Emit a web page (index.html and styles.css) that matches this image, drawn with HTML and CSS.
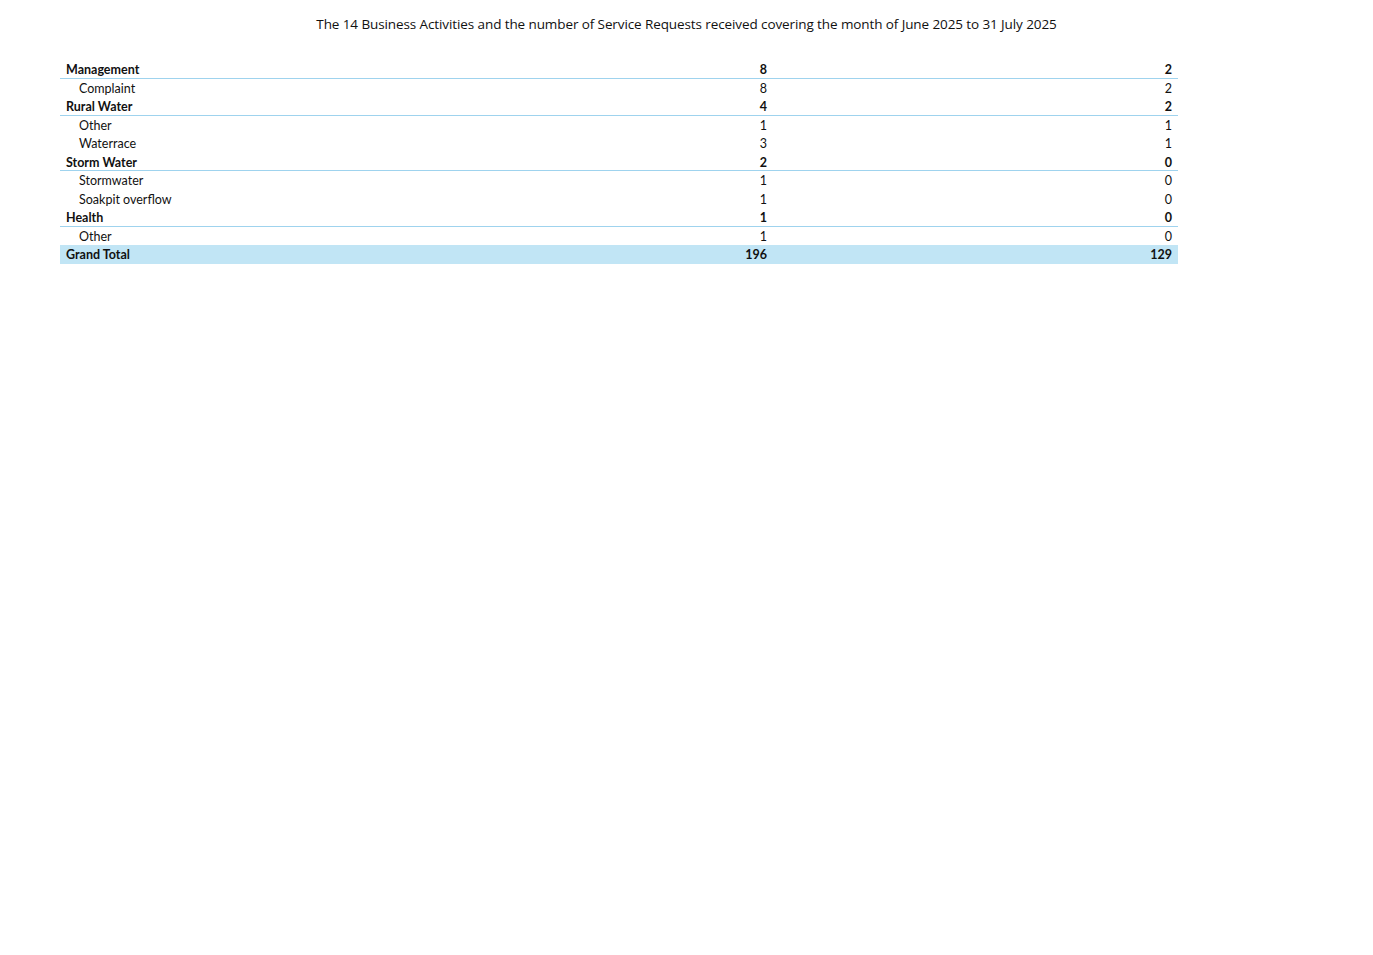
FILE: index.html
```html
<!DOCTYPE html>
<html>
<head>
<meta charset="utf-8">
<link rel="stylesheet" href="styles.css">
</head>
<body>
<h1 class="title">The 14 Business Activities and the number of Service Requests received covering the month of June 2025 to 31 July 2025</h1>
<div class="pivot">
  <div class="row group"><span class="label">Management</span><span class="num">8</span><span class="num">2</span></div>
  <div class="row item"><span class="label">Complaint</span><span class="num">8</span><span class="num">2</span></div>
  <div class="row group"><span class="label">Rural Water</span><span class="num">4</span><span class="num">2</span></div>
  <div class="row item"><span class="label">Other</span><span class="num">1</span><span class="num">1</span></div>
  <div class="row item"><span class="label">Waterrace</span><span class="num">3</span><span class="num">1</span></div>
  <div class="row group"><span class="label">Storm Water</span><span class="num">2</span><span class="num">0</span></div>
  <div class="row item"><span class="label">Stormwater</span><span class="num">1</span><span class="num">0</span></div>
  <div class="row item"><span class="label">Soakpit overflow</span><span class="num">1</span><span class="num">0</span></div>
  <div class="row group"><span class="label">Health</span><span class="num">1</span><span class="num">0</span></div>
  <div class="row item"><span class="label">Other</span><span class="num">1</span><span class="num">0</span></div>
  <div class="row total"><span class="label">Grand Total</span><span class="num">196</span><span class="num">129</span></div>
</div>
</body>
</html>
```
FILE: styles.css
```css
html, body {
  margin: 0;
  padding: 0;
  background: #ffffff;
}
body {
  font-family: "Lato", "Liberation Sans", sans-serif;
  color: #111;
}
.title {
  margin: 0;
  padding-top: 14px;
  height: 20px;
  font-family: "Open Sans", "Liberation Sans", sans-serif;
  font-size: 13.5px;
  font-weight: normal;
  text-align: center;
  line-height: 20px;
  letter-spacing: -0.1px;
}
.pivot {
  margin: 26px 0 0 60px;
  width: 1118px;
  display: flex;
  flex-direction: column;
}
.row {
  display: grid;
  grid-template-columns: 707px 1fr 405px;
  height: 18.56px;
  box-sizing: border-box;
  font-size: 12.5px;
  line-height: 20px;
}
.row .label {
  grid-column: 1 / 2;
  grid-row: 1;
  padding-left: 6px;
  white-space: nowrap;
}
.row .num {
  text-align: right;
  padding-right: 6px;
}
.row .num:nth-child(2) {
  grid-column: 1 / 2;
  grid-row: 1;
  padding-right: 0;
}
.row .num:nth-child(3) {
  grid-column: 2 / 4;
  grid-row: 1;
}
.group {
  font-weight: bold;
  border-bottom: 1px solid #9fd3ee;
}
.item .label {
  padding-left: 19px;
}
.total {
  font-weight: bold;
  background: #c1e5f5;
}
```
